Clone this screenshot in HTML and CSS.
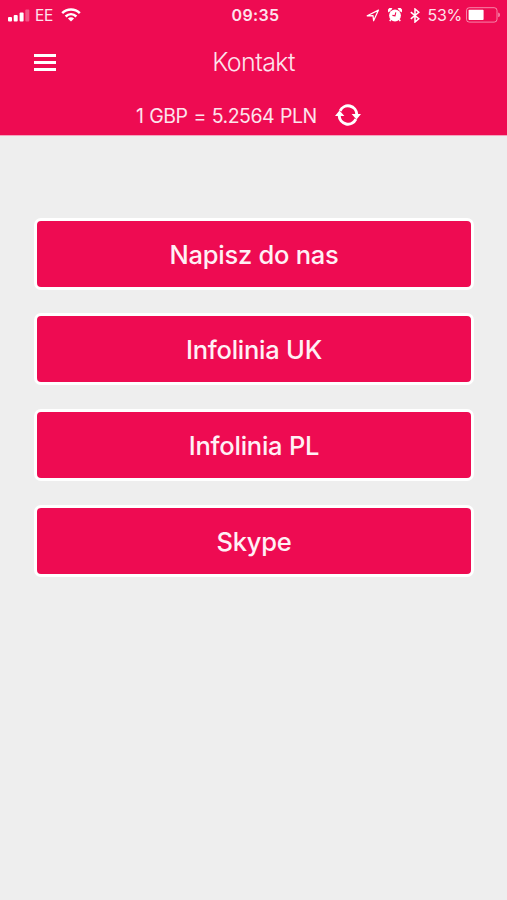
FILE: index.html
```
<!DOCTYPE html>
<html lang="pl">

<head>
	<meta charset="utf-8">
	<meta name="viewport" content="width=device-width, initial-scale=1">
	<title>Kontakt</title>
	<link rel="stylesheet" href="styles.css">
</head>

<body>
	<header class="header">
		<div class="statusBar">
			<div class="statusLeft">
				<svg class="signal" width="22" height="13" viewBox="0 0 22 13">
					<rect x="0" y="8" width="4" height="4.5" rx="1" />
					<rect x="5.7" y="6" width="4" height="6.5" rx="1" />
					<rect x="11.6" y="3.5" width="4" height="9" rx="1" />
					<rect x="17.3" y="0.5" width="4" height="12" rx="1" opacity="0.3" />
				</svg>
				<span class="carrier">EE</span>
				<svg class="wifi" width="20" height="14" viewBox="0 0 20 14">
					<g fill="none" stroke="#fff" stroke-width="2.5">
						<path d="M1.2 5.2C6.2 0.3 13.8 0.3 18.8 5.2" />
						<path d="M4.6 8.5C7.8 5.5 12.2 5.5 15.4 8.5" />
					</g>
					<path d="M10 13.6L6.9 10.6Q10 8 13.1 10.6Z" />
				</svg>
			</div>
			<div class="time">09:35</div>
			<div class="statusRight">
				<svg class="location" width="14" height="13" viewBox="0 0 14 13">
					<path d="M1.2 6.8L12.5 1.1L7.6 11.8L7 6.6Z" fill="none" stroke="#fff" stroke-width="1.2" stroke-linejoin="round" />
				</svg>
				<svg class="alarm" width="14" height="14" viewBox="0 0 14 14">
					<path d="M0.6 4.4A2.6 2.6 0 0 1 4.4 0.7ZM13.4 4.4A2.6 2.6 0 0 0 9.6 0.7Z" />
					<circle cx="7" cy="7.5" r="5.9" />
					<path d="M2.8 11.4L1.8 13.2M11.2 11.4L12.2 13.2" stroke="#fff" stroke-width="1.4" />
					<path d="M7.8 4.4L7 7.9L4.4 7.4" fill="none" stroke="#ee0b52" stroke-width="1.1" />
				</svg>
				<svg class="bluetooth" width="10" height="15" viewBox="0 0 10 15">
					<path d="M0.8 4.1L8.8 10.8L5 14V1L8.8 4.2L0.8 10.9" fill="none" stroke="#fff" stroke-width="1.5" />
				</svg>
				<span class="percent">53%</span>
				<svg class="battery" width="34" height="16" viewBox="0 0 34 16">
					<rect x="0.5" y="0.7" width="30.5" height="14.4" rx="2.8" fill="none" stroke="#fff" opacity="0.5" />
					<rect x="2.6" y="2.8" width="15" height="10.2" rx="0.8" />
					<path d="M32.2 5.5Q34 6 34 7.9T32.2 10.3Z" opacity="0.5" />
				</svg>
			</div>
		</div>

		<div class="titleBar">
			<button class="menuButton" aria-label="Menu">
				<span></span>
				<span></span>
				<span></span>
			</button>
			<h1 class="title">Kontakt</h1>
		</div>

		<div class="rateBar">
			<span class="rate">1 GBP = 5.2564 PLN</span>
			<svg class="refresh" width="26" height="22" viewBox="0 0 26 22">
				<g fill="none" stroke="#fff" stroke-width="3">
					<path d="M5.1 6.8A8.8 8.8 0 0 1 21.8 10.5" />
					<path d="M20.9 15.2A8.8 8.8 0 0 1 4.2 11.5" />
				</g>
				<path d="M16.6 10H26L21.5 15.6Z" />
				<path d="M0 12H9.4L4.5 6.4Z" />
			</svg>
		</div>
	</header>

	<main class="buttons">
		<button class="contactButton">Napisz do nas</button>
		<button class="contactButton">Infolinia UK</button>
		<button class="contactButton">Infolinia PL</button>
		<button class="contactButton">Skype</button>
	</main>
</body>

</html>
```

FILE: styles.css
```
* {
	box-sizing: border-box;
}

body {
	margin: 0;
	min-height: 900px;
	background-color: #eeeeee;
	font-family: Inter, 'Liberation Sans', sans-serif;
}

button {
	font-family: inherit;
}

svg {
	display: block;
	flex: none;
	fill: #fff;
}

.header {
	height: 136px;
	background-color: #ee0b52;
	border-bottom: 1px solid #f4a3bd;
	color: #fde3ec;
}

/* status bar */
.statusBar {
	display: grid;
	grid-template-columns: 1fr auto 1fr;
	align-items: center;
	height: 30px;
	padding: 0 7px 0 8px;
}

.statusLeft,
.statusRight {
	display: flex;
	align-items: center;
}

.statusRight {
	justify-content: flex-end;
}

.carrier {
	margin-left: 5px;
	font-size: 15.5px;
	font-weight: 400;
	letter-spacing: -0.4px;
}

.wifi {
	margin-left: 8px;
}

.time {
	padding-left: 3px;
	font-size: 16px;
	font-weight: 600;
	letter-spacing: 0.4px;
}

.alarm {
	margin-left: 8px;
}

.bluetooth {
	margin-left: 8px;
}

.percent {
	margin-left: 8px;
	font-size: 16px;
	font-weight: 400;
	letter-spacing: -0.3px;
}

.battery {
	margin-left: 4px;
}

/* title */
.titleBar {
	display: grid;
	grid-template-columns: 90px 1fr 90px;
	align-items: center;
	height: 64px;
}

.menuButton {
	display: flex;
	flex-direction: column;
	gap: 4px;
	width: 22px;
	margin-left: 34px;
	padding: 0;
	border: none;
	background: none;
}

.menuButton span {
	height: 3px;
	width: 22px;
	background-color: #fff;
}

.title {
	margin: 0;
	text-align: center;
	font-size: 25px;
	font-weight: 300;
	letter-spacing: -0.6px;
}

/* exchange rate */
.rateBar {
	display: flex;
	align-items: center;
	height: 42px;
	padding-left: 136px;
}

.rate {
	width: 180px;
	padding-top: 2px;
	white-space: nowrap;
	font-size: 19.5px;
	font-weight: 400;
	letter-spacing: -0.5px;
	word-spacing: 0.9px;
}

.refresh {
	margin-left: 19px;
}

/* contact buttons */
.buttons {
	display: flex;
	flex-direction: column;
	gap: 23.7px;
	padding: 81.5px 33px 0 34px;
}

.contactButton {
	height: 72px;
	padding: 1px 0 0;
	border: 3px solid #fff;
	border-radius: 7px;
	background-color: #ee0b52;
	color: #fff0f5;
	font-size: 25.5px;
	font-weight: 500;
	letter-spacing: -0.25px;
}
```
